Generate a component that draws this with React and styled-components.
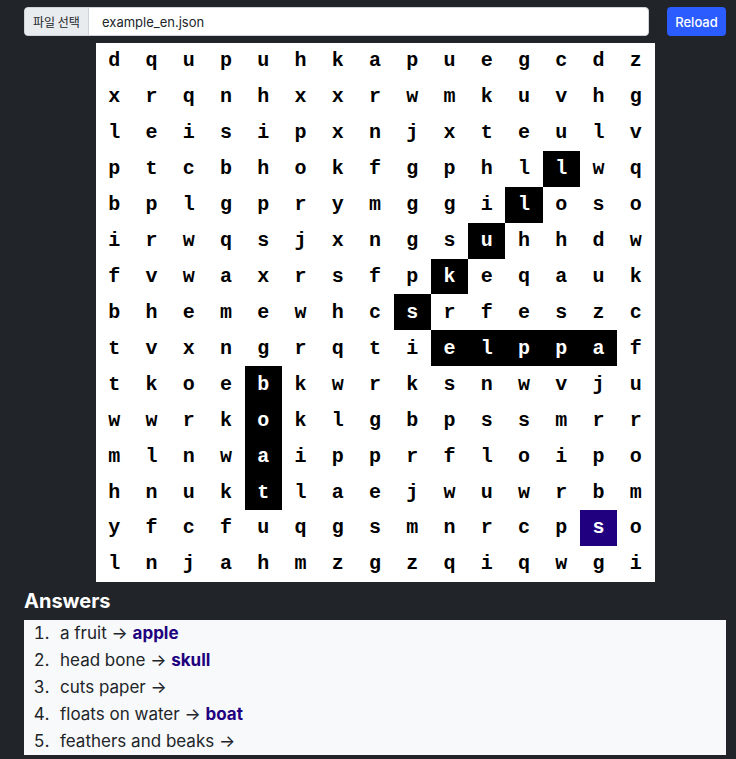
import React from "react";
import styled, { createGlobalStyle } from "styled-components";

const GlobalStyle = createGlobalStyle`
	html, body {
		margin: 0;
		padding: 0;
		background: #212529;
		font-family: Inter, "Liberation Sans", "Noto Sans CJK KR", sans-serif;
	}
`;

const Page = styled.div`
	padding: 7px 10px 0 24px;
	min-height: 759px;
	box-sizing: border-box;
`;

const Toolbar = styled.div`
	display: flex;
	align-items: center;
	gap: 18px;
	height: 29px;
`;

const FileGroup = styled.div`
	flex: 1;
	display: flex;
	height: 29px;
	border: 1px solid #ced4da;
	border-radius: 4px;
	overflow: hidden;
	background: #fff;
	box-sizing: border-box;
`;

const FileButton = styled.div`
	display: flex;
	align-items: center;
	width: 64px;
	justify-content: center;
	box-sizing: border-box;
	background: #e9ecef;
	border-right: 1px solid #ced4da;
	font-size: 12px;
	color: #212529;
	font-family: "Noto Sans CJK KR", sans-serif;
`;

const FileName = styled.div`
	display: flex;
	align-items: center;
	padding-left: 13px;
	font-size: 13px;
	color: #212529;
`;

const ReloadButton = styled.button`
	height: 29px;
	width: 59px;
	border: none;
	border-radius: 4px;
	background: #2a5cff;
	color: #fff;
	font-family: inherit;
	font-size: 13px;
	font-weight: 500;
	padding: 0;
`;

const Board = styled.div`
	margin: 7px auto 0;
	width: 559px;
	background: #fff;
	display: grid;
	grid-template-columns: repeat(15, 1fr);
	grid-auto-rows: 35.93px;
`;

const Cell = styled.div`
	display: flex;
	align-items: center;
	justify-content: center;
	font-family: "Liberation Mono", "Courier New", monospace;
	font-weight: bold;
	font-size: 20px;
	background: ${p => (p.$mark === "found" ? "#000" : p.$mark === "pick" ? "#21007f" : "transparent")};
	color: ${p => (p.$mark ? "#fff" : "#000")};
`;

const Heading = styled.h2`
	margin: 7px 0 7px;
	color: #fff;
	font-size: 20px;
	font-weight: 700;
	line-height: 24px;
`;

const AnswerBox = styled.ol`
	margin: 0;
	background: #f8f9fa;
	padding: 0 0 0 30px;
	list-style: decimal;
`;

const AnswerItem = styled.li`
	font-size: 17px;
	line-height: 27px;
	color: #212529;
	padding-left: 6px;
`;

const Word = styled.span`
	color: #21007f;
	font-weight: 700;
`;

const rows = [
	"dqupuhkapuegcdz",
	"xrqnhxxrwmkuvhg",
	"leisipxnjxteulv",
	"ptcbhokfgphllwq",
	"bplgprymggiloso",
	"irwqsjxngsuhhdw",
	"fvwaxrsfpkeqauk",
	"bhemewhcsrfeszc",
	"tvxngrqtielppaf",
	"tkoebkwrksnwvju",
	"wwrkoklgbpssmrr",
	"mlnwaipprfloipo",
	"hnuktlaejwuwrbm",
	"yfcfuqgsmnrcpso",
	"lnjahmzgzqiqwgi",
];

const found = new Set([
	"3-12", "4-11", "5-10", "6-9", "7-8",
	"8-9", "8-10", "8-11", "8-12", "8-13",
	"9-4", "10-4", "11-4", "12-4",
]);

const answers = [
	{ clue: "a fruit", word: "apple" },
	{ clue: "head bone", word: "skull" },
	{ clue: "cuts paper", word: null },
	{ clue: "floats on water", word: "boat" },
	{ clue: "feathers and beaks", word: null },
];

export default function App() {
	return (
		<>
			<GlobalStyle />
			<Page>
				<Toolbar>
					<FileGroup>
						<FileButton>파일 선택</FileButton>
						<FileName>example_en.json</FileName>
					</FileGroup>
					<ReloadButton>Reload</ReloadButton>
				</Toolbar>
				<Board>
					{rows.map((row, r) =>
						row.split("").map((ch, c) => {
							const key = `${r}-${c}`;
							const mark = found.has(key) ? "found" : key === "13-13" ? "pick" : null;
							return (
								<Cell key={key} $mark={mark}>
									{ch}
								</Cell>
							);
						})
					)}
				</Board>
				<Heading>Answers</Heading>
				<AnswerBox>
					{answers.map(a => (
						<AnswerItem key={a.clue}>
							{a.clue} → {a.word && <Word>{a.word}</Word>}
						</AnswerItem>
					))}
				</AnswerBox>
			</Page>
		</>
	);
}
